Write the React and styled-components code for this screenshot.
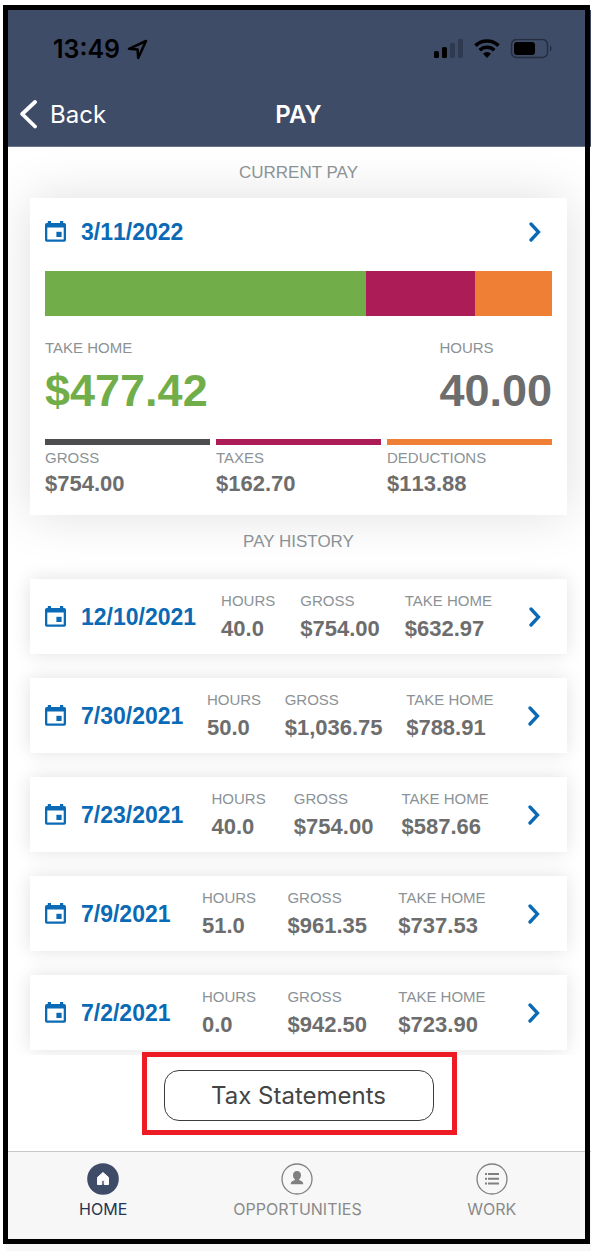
import React from "react";
import styled, { createGlobalStyle } from "styled-components";

const current = {
  date: "3/11/2022",
  takeHome: 477.42,
  taxes: 162.7,
  deductions: 113.88,
  gross: 754,
  hours: "40.00",
};

const history = [
  { date: "12/10/2021", hours: "40.0", gross: "$754.00", takeHome: "$632.97" },
  { date: "7/30/2021", hours: "50.0", gross: "$1,036.75", takeHome: "$788.91" },
  { date: "7/23/2021", hours: "40.0", gross: "$754.00", takeHome: "$587.66" },
  { date: "7/9/2021", hours: "51.0", gross: "$961.35", takeHome: "$737.53" },
  { date: "7/2/2021", hours: "0.0", gross: "$942.50", takeHome: "$723.90" },
];

const money = (n) => "$" + n.toFixed(2);

const CalendarIcon = () => (
  <svg width="21" height="21" viewBox="0 0 21 21" fill="#0a6ab5">
    <path
      fillRule="evenodd"
      d="M2.800 0h3.200v2h9V0h3.200v2h1A1.800 1.800 0 0 1 21 3.800v15.200a1.800 1.800 0 0 1-1.800 1.800H1.800A1.800 1.800 0 0 1 0 19V3.800A1.800 1.800 0 0 1 1.800 2h1zM2.300 6.400v12.200h16.400V6.400z"
    />
    <rect x="11.400" y="10.800" width="5.200" height="5.200" />
  </svg>
);

const ArrowIcon = () => (
  <svg width="12" height="20" viewBox="0 0 12 20">
    <path
      d="M2 2l7.500 8L2 18"
      fill="none"
      stroke="#0a6ab5"
      strokeWidth="3.300"
      strokeLinecap="round"
      strokeLinejoin="miter"
    />
  </svg>
);

const BackIcon = () => (
  <svg width="17" height="29" viewBox="0 0 17 29">
    <path
      d="M15 2L2.200 14 15 26.500"
      fill="none"
      stroke="#fff"
      strokeWidth="3.800"
      strokeLinecap="round"
      strokeLinejoin="round"
    />
  </svg>
);

const LocationIcon = () => (
  <svg width="21" height="21" viewBox="0 0 21 21">
    <path
      d="M19 2L2 9.800l8.600.600.600 8.600z"
      fill="none"
      stroke="#000"
      strokeWidth="2.500"
      strokeLinejoin="round"
    />
  </svg>
);

const StatusIcons = () => (
  <svg width="120" height="20" viewBox="0 0 120 20">
    <rect x="0" y="12" width="5" height="7" rx="1.500" />
    <rect x="8" y="8" width="5" height="11" rx="1.500" />
    <g fill="#2f3950">
      <rect x="16" y="4" width="5" height="15" rx="1.500" />
      <rect x="24" y="0" width="5" height="19" rx="1.500" />
    </g>
    <g fill="none" stroke="#000" strokeWidth="3.600">
      <path d="M41.500 6.600a16.500 16.500 0 0 1 23 0" />
      <path d="M45.700 11.200a10.500 10.500 0 0 1 14.600 0" />
    </g>
    <path d="M53 19l-4-4.300a5.300 5.300 0 0 1 8 0z" />
    <rect
      x="77.500"
      y="0.500"
      width="36"
      height="18"
      rx="5"
      fill="none"
      stroke="#242c3d"
      strokeWidth="1.400"
    />
    <rect x="80" y="3" width="21" height="13" rx="3" />
    <path d="M116 6.500c2 .8 2 5.200 0 6z" fill="#242c3d" />
  </svg>
);

const HomeIcon = () => (
  <svg width="32" height="32" viewBox="0 0 32 32">
    <circle cx="16" cy="16" r="15.800" fill="#3f4c67" />
    <path
      d="M16 9.500l5.500 4.900V21.500h-4.300v-4.200h-2.400v4.200h-4.300v-7.100z"
      fill="#fff"
      stroke="#fff"
      strokeLinejoin="round"
    />
  </svg>
);

const PersonIcon = () => (
  <svg width="32" height="32" viewBox="0 0 32 32" fill="#808080">
    <circle cx="16" cy="16" r="15" fill="none" stroke="#808080" strokeWidth="1.300" />
    <path d="M16 8c2.600 0 4 1.700 4 4.300 0 1.900-.8 3.400-2 4.200v.5c1.600.5 4.300 1.200 4.300 4.200H9.700c0-3 2.700-3.700 4.300-4.200v-.5c-1.200-.8-2-2.300-2-4.200C12 9.700 13.400 8 16 8z" />
  </svg>
);

const ListIcon = () => (
  <svg width="32" height="32" viewBox="0 0 32 32" fill="#808080">
    <circle cx="16" cy="16" r="15" fill="none" stroke="#808080" strokeWidth="1.300" />
    <path d="M9 10h2v2H9zM9 14.800h2v2H9zM9 19.600h2v2H9zM12 10h11v2H12zM12 14.800h11v2H12zM12 19.600h11v2H12z" />
  </svg>
);

const App = () => {
  return (
    <>
      <GlobalStyle />
      <Screen>
        <Header>
          <StatusBar>
            <Clock>
              13:49 <LocationIcon />
            </Clock>
            <StatusIcons />
          </StatusBar>
          <NavBar>
            <BackButton>
              <BackIcon /> Back
            </BackButton>
            <Title>PAY</Title>
          </NavBar>
        </Header>

        <PayList>
          <SectionTitle>CURRENT PAY</SectionTitle>
          <CurrentCard>
            <CardTop>
              <PayDate>
                <CalendarIcon /> {current.date}
              </PayDate>
              <DetailsButton aria-label="View current pay">
                <ArrowIcon />
              </DetailsButton>
            </CardTop>
            <PayBar>
              <Segment $color="#71ae4a" style={{ flexGrow: current.takeHome }} />
              <Segment $color="#ac1c57" style={{ flexGrow: current.taxes }} />
              <Segment $color="#ef7f35" style={{ flexGrow: current.deductions }} />
            </PayBar>
            <Totals>
              <div>
                <Label>TAKE HOME</Label>
                <Total $color="#71ae4a">{money(current.takeHome)}</Total>
              </div>
              <div>
                <Label>HOURS</Label>
                <Total $color="#6d6d6d">{current.hours}</Total>
              </div>
            </Totals>
            <Breakdown>
              <Part $color="#4d4c4f">
                <Label>GROSS</Label>
                <Value>{money(current.gross)}</Value>
              </Part>
              <Part $color="#ac1c57">
                <Label>TAXES</Label>
                <Value>{money(current.taxes)}</Value>
              </Part>
              <Part $color="#ef7f35">
                <Label>DEDUCTIONS</Label>
                <Value>{money(current.deductions)}</Value>
              </Part>
            </Breakdown>
          </CurrentCard>

          <SectionTitle $history>PAY HISTORY</SectionTitle>
          <History>
            {history.map((pay) => (
              <HistoryCard key={pay.date}>
                <PayDate>
                  <CalendarIcon /> {pay.date}
                </PayDate>
                <Stat>
                  <Label>HOURS</Label>
                  <Value>{pay.hours}</Value>
                </Stat>
                <Stat>
                  <Label>GROSS</Label>
                  <Value>{pay.gross}</Value>
                </Stat>
                <Stat>
                  <Label>TAKE HOME</Label>
                  <Value>{pay.takeHome}</Value>
                </Stat>
                <DetailsButton aria-label={"View pay for " + pay.date}>
                  <ArrowIcon />
                </DetailsButton>
              </HistoryCard>
            ))}
          </History>
        </PayList>

        <Actions>
          <Highlight>
            <TaxButton>Tax Statements</TaxButton>
          </Highlight>
        </Actions>

        <TabBar>
          <Tab href="#home" $active>
            <HomeIcon />
            HOME
          </Tab>
          <Tab href="#opportunities">
            <PersonIcon />
            OPPORTUNITIES
          </Tab>
          <Tab href="#work">
            <ListIcon />
            WORK
          </Tab>
        </TabBar>
      </Screen>
    </>
  );
};

const GlobalStyle = createGlobalStyle`
  * {
    box-sizing: border-box;
  }

  body {
    margin: 0;
    background-color: #fff;
    font-family: "Liberation Sans", Arial, Helvetica, sans-serif;
  }

  button {
    background: none;
    border: none;
    padding: 0;
    font: inherit;
    cursor: pointer;
  }

  svg {
    display: block;
    flex: none;
  }
`;

const Screen = styled.div`
  position: relative;
  display: flex;
  flex-direction: column;
  min-height: calc(100vh - 10px);
  margin: 10px 8px 0 6px;

  /* black outline around the phone screen */
  &::after {
    content: "";
    position: absolute;
    top: -5px;
    left: -3px;
    right: 1px;
    bottom: 7px;
    border: 5px solid #000;
    pointer-events: none;
  }
`;

const Header = styled.header`
  background-color: #3f4c67;
  border-bottom: 1px solid #6b7389;
  font-family: Inter, "Liberation Sans", sans-serif;
`;

const StatusBar = styled.div`
  display: flex;
  justify-content: space-between;
  align-items: center;
  height: 78px;
  padding: 0 37px 0 47px;
`;

const Clock = styled.div`
  display: flex;
  align-items: center;
  gap: 7px;
  font-size: 25px;
  font-weight: 600;
`;

const NavBar = styled.div`
  display: grid;
  grid-template-columns: 1fr auto 1fr;
  align-items: center;
  height: 52px;
  margin-bottom: 6px;
  padding: 0 14px;
  color: #fff;
`;

const BackButton = styled.button`
  display: flex;
  align-items: center;
  gap: 13px;
  justify-self: start;
  color: #fff;
  font-size: 24px;
`;

const Title = styled.h1`
  margin: 0;
  font-size: 24px;
  font-weight: 600;
`;

const PayList = styled.main`
  padding: 0 24px 5px;
  overflow: hidden;
`;

const SectionTitle = styled.h2`
  margin: 0;
  padding-bottom: ${(props) => (props.$history ? "11px" : "0")};
  color: #8b9296;
  font-size: 17px;
  font-weight: 400;
  line-height: ${(props) => (props.$history ? "53px" : "51px")};
  text-align: center;
`;

const CurrentCard = styled.section`
  padding: 0 15px 18px;
  background-color: #fff;
  box-shadow: 0 0 48px rgba(0, 0, 0, 0.13);
`;

const CardTop = styled.div`
  display: flex;
  justify-content: space-between;
  align-items: center;
  height: 67px;
  margin-bottom: 6px;
`;

const PayDate = styled.div`
  display: flex;
  align-items: center;
  gap: 15px;
  color: #0a6ab5;
  font-size: 23px;
  font-weight: 700;
  font-kerning: none;
  line-height: 28px;
`;

const DetailsButton = styled.button`
  display: flex;
  justify-content: center;
  width: 35px;
`;

const PayBar = styled.div`
  display: flex;
  height: 45px;
`;

const Segment = styled.div`
  flex-basis: 0;
  background-color: ${(props) => props.$color};
`;

const Totals = styled.div`
  display: flex;
  justify-content: space-between;
  margin-top: 22px;
`;

const Label = styled.div`
  color: #8b9296;
  font-size: 15px;
  line-height: 20px;
`;

const Total = styled.div`
  margin-top: 8px;
  color: ${(props) => props.$color};
  font-size: 45px;
  font-weight: 700;
  font-kerning: none;
  line-height: 50px;
`;

const Value = styled.div`
  color: #6d6d6d;
  font-size: 22px;
  font-weight: 700;
  font-kerning: none;
  line-height: 26px;
`;

const Breakdown = styled.div`
  display: grid;
  grid-template-columns: repeat(3, 1fr);
  gap: 6px;
  margin-top: 23px;
`;

const Part = styled.div`
  display: flex;
  flex-direction: column;
  gap: 3px;
  padding-top: 3px;
  border-top: 6px solid ${(props) => props.$color};
`;

const History = styled.div`
  display: flex;
  flex-direction: column;
  gap: 24px;
`;

const HistoryCard = styled.article`
  display: flex;
  justify-content: space-between;
  align-items: center;
  padding: 12px 15px;
  background-color: #fff;
  box-shadow: 0 0 18px rgba(0, 0, 0, 0.12);
`;

const Stat = styled.div`
  display: flex;
  flex-direction: column;
  gap: 5px;
`;

const Actions = styled.div`
  display: flex;
  flex: 1;
  justify-content: center;
  align-items: flex-start;
  padding: 15px 0 29px;
`;

const Highlight = styled.div`
  position: relative;

  &::after {
    content: "";
    position: absolute;
    inset: -18px -23px -14px -22px;
    border: 5px solid #ed1c24;
    pointer-events: none;
  }
`;

const TaxButton = styled.button`
  width: 270px;
  height: 51px;
  border: 1px solid #3c3c3c;
  border-radius: 15px;
  color: #444;
  font-family: Inter, "Liberation Sans", sans-serif;
  font-size: 24px;
`;

const TabBar = styled.nav`
  display: grid;
  grid-template-columns: repeat(3, 1fr);
  height: 100px;
  padding-right: 2px;
  background-color: #f7f7f7;
  border-top: 1px solid #c8c8c8;
`;

const Tab = styled.a`
  display: flex;
  flex-direction: column;
  align-items: center;
  gap: 3px;
  padding-top: 11px;
  color: ${(props) => (props.$active ? "#263453" : "#8a8a8a")};
  font-family: Inter, "Liberation Sans", sans-serif;
  font-size: 16px;
  line-height: 22px;
  text-decoration: none;
`;

export default App;
